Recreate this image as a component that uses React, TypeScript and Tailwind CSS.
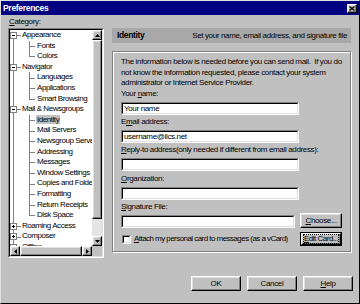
import React from 'react';

const raised =
    'border border-t-white border-l-white border-r-black border-b-black shadow-[inset_-1px_-1px_0_#808080,inset_1px_1px_0_#dfdfdf] bg-[#c0c0c0]';

type Node = { t: string; lvl: 0 | 1; exp?: '+' | '-'; last?: boolean; sel?: boolean };

const tree: Node[] = [
    { t: 'Appearance', lvl: 0, exp: '-' },
    { t: 'Fonts', lvl: 1 },
    { t: 'Colors', lvl: 1, last: true },
    { t: 'Navigator', lvl: 0, exp: '-' },
    { t: 'Languages', lvl: 1 },
    { t: 'Applications', lvl: 1 },
    { t: 'Smart Browsing', lvl: 1, last: true },
    { t: 'Mail & Newsgroups', lvl: 0, exp: '-' },
    { t: 'Identity', lvl: 1, sel: true },
    { t: 'Mail Servers', lvl: 1 },
    { t: 'Newsgroup Servers', lvl: 1 },
    { t: 'Addressing', lvl: 1 },
    { t: 'Messages', lvl: 1 },
    { t: 'Window Settings', lvl: 1 },
    { t: 'Copies and Folders', lvl: 1 },
    { t: 'Formatting', lvl: 1 },
    { t: 'Return Receipts', lvl: 1 },
    { t: 'Disk Space', lvl: 1, last: true },
    { t: 'Roaming Access', lvl: 0, exp: '+' },
    { t: 'Composer', lvl: 0, exp: '+' },
    { t: 'Offline', lvl: 0, exp: '+' },
    { t: 'Advanced', lvl: 0, exp: '+' },
];

const TreeRow: React.FC<{ node: Node; first: boolean }> = ({ node, first }) => (
    <div className="relative h-[10.6px] leading-[10.6px] whitespace-nowrap tracking-[-0.45px]">
        <span className={first ? 'absolute left-[3px] top-1/2 bottom-0 w-px bg-[#808080]' : 'absolute left-[3px] top-0 bottom-0 w-px bg-[#808080]'} />
        {node.lvl === 0 ? (
            <>
                <span className="absolute left-[7px] top-1/2 w-[4px] h-px bg-[#808080]" />
                <span className="absolute left-0 top-[2px] w-[7px] h-[7px] border border-[#808080] bg-white">
                    <span className="absolute left-[1px] top-[2px] w-[3px] h-px bg-black" />
                    {node.exp === '+' && <span className="absolute left-[2px] top-[1px] w-px h-[3px] bg-black" />}
                </span>
                <span className="pl-[12px]">{node.t}</span>
            </>
        ) : (
            <>
                <span className={node.last ? 'absolute left-[19px] top-0 h-1/2 w-px bg-[#808080]' : 'absolute left-[19px] top-0 bottom-0 w-px bg-[#808080]'} />
                <span className="absolute left-[19px] top-1/2 w-[6px] h-px bg-[#808080]" />
                <span className="pl-[27px]">
                    <span className={node.sel ? 'bg-[#c0c0c0] px-px -mx-px' : ''}>{node.t}</span>
                </span>
            </>
        )}
    </div>
);

const Arrow: React.FC<{ dir: 'up' | 'down' | 'left' | 'right' }> = ({ dir }) => {
    const d = {
        up: 'M2.5 0L5 3H0z',
        down: 'M0 0H5L2.5 3z',
        left: 'M3 0V5L0 2.5z',
        right: 'M0 0V5L3 2.5z',
    }[dir];
    const horiz = dir === 'left' || dir === 'right';
    return (
        <div className={`w-[10px] h-[10px] shrink-0 flex items-center justify-center ${raised}`}>
            <svg width={horiz ? 3 : 5} height={horiz ? 5 : 3} viewBox={horiz ? '0 0 3 5' : '0 0 5 3'}>
                <path d={d} fill="black" />
            </svg>
        </div>
    );
};

const Field: React.FC<{ w: string; value?: string }> = ({ w, value }) => (
    <div className={`h-[13px] ${w} border border-t-[#808080] border-l-[#808080] border-r-white border-b-white`}>
        <div className="h-full border border-t-black border-l-black border-r-[#dfdfdf] border-b-[#dfdfdf] bg-white pl-[1px] leading-[10px]">
            {value}
        </div>
    </div>
);

const Button: React.FC<{ className: string; children: React.ReactNode; focus?: boolean }> = ({ className, children, focus }) =>
    focus ? (
        <div className={`${className} border border-black`}>
            <div className={`h-full flex items-center justify-center ${raised}`}>
                <span className="border border-dotted border-black leading-[8px] whitespace-nowrap tracking-[-0.5px]">{children}</span>
            </div>
        </div>
    ) : (
        <div className={`${className} flex items-center justify-center whitespace-nowrap ${raised}`}>{children}</div>
    );

const Label: React.FC<{ children: React.ReactNode; className?: string }> = ({ children, className = '' }) => (
    <div className={`h-[10px] leading-[10px] ${className}`}>{children}</div>
);

export default function App() {
    return (
        <div className="w-[360px] h-[304px] bg-[#c0c0c0] border border-t-[#dfdfdf] border-l-[#dfdfdf] border-r-black border-b-black font-['Liberation_Sans',Arial,sans-serif] text-[8px] tracking-[-0.35px] text-black flex flex-col">
            {/* title bar */}
            <div className="h-[14px] bg-[#000080] flex items-center justify-between pl-[2px] pr-[2px]">
                <span className="text-white font-bold text-[8.5px] tracking-[-0.3px]">Preferences</span>
                <div className={`w-[10px] h-[9px] flex items-center justify-center ${raised}`}>
                    <svg width="6" height="5" viewBox="0 0 6 5">
                        <path d="M0.5 0.5L5.5 4.5M5.5 0.5L0.5 4.5" stroke="black" strokeWidth="1.3" />
                    </svg>
                </div>
            </div>

            <div className="flex pl-[7px]">
                {/* category tree */}
                <div className="w-[96px]">
                    <div className="h-[13px] pt-[2px] pl-[1px] leading-[10px]">
                        <u>C</u>ategory:
                    </div>
                    <div className="w-[96px] h-[230px] border border-t-[#808080] border-l-[#808080] border-r-white border-b-white">
                        <div className="h-full border border-t-black border-l-black border-r-[#dfdfdf] border-b-[#dfdfdf] bg-white flex flex-col">
                            <div className="flex flex-1 min-h-0">
                                <div className="flex-1 overflow-hidden">
                                    {tree.map((n, i) => (
                                        <TreeRow key={n.t} node={n} first={i === 0} />
                                    ))}
                                </div>
                                <div className="w-[10px] flex flex-col">
                                    <Arrow dir="up" />
                                    <div className={`h-[179px] ${raised}`} />
                                    <div className="flex-1 bg-[#e4e4e4]" />
                                    <Arrow dir="down" />
                                </div>
                            </div>
                            <div className="flex h-[10px]">
                                <Arrow dir="left" />
                                <div className={`flex-1 ${raised}`} />
                                <Arrow dir="right" />
                                <div className="w-[10px] bg-[#c0c0c0]" />
                            </div>
                        </div>
                    </div>
                </div>

                {/* right panel */}
                <div className="ml-[8px] w-[239px] mt-[13px]">
                    <div className="h-[15px] bg-[#a8a8a8] flex items-center justify-between pl-[5px] pr-[4px]">
                        <span className="font-bold text-[8.5px]">Identity</span>
                        <span>Set your name, email address, and signature file</span>
                    </div>
                    <div className="mt-[8px] h-[201px] border border-[#808080] shadow-[1px_1px_0_white,inset_1px_1px_0_white] pl-[8px] pt-[5px]">
                        <div className="leading-[10.5px]">
                            The information below is needed before you can send mail.&nbsp; If you do
                            <br />
                            not know the information requested, please contact your system
                            <br />
                            administrator or Internet Service Provider.
                        </div>
                        <Label>
                            Your <u>n</u>ame:
                        </Label>
                        <div className="mt-[3px]">
                            <Field w="w-[178px]" value="Your name" />
                        </div>
                        <Label className="mt-[2px]">
                            E<u>m</u>ail address:
                        </Label>
                        <div className="mt-[3px]">
                            <Field w="w-[178px]" value="username@ilcs.net" />
                        </div>
                        <Label className="mt-[2.5px]">
                            <u>R</u>eply-to address(only needed if different from email address):
                        </Label>
                        <div className="mt-[3px]">
                            <Field w="w-[178px]" />
                        </div>
                        <Label className="mt-[2.5px]">
                            <u>O</u>rganization:
                        </Label>
                        <div className="mt-[3px]">
                            <Field w="w-[178px]" />
                        </div>
                        <Label className="mt-[2.5px]">
                            <u>S</u>ignature File:
                        </Label>
                        <div className="mt-[1px] flex items-end">
                            <Field w="w-[174px]" />
                            <Button className="ml-[5px] w-[42px] h-[15px]">
                                <span>
                                    <u>C</u>hoose...
                                </span>
                            </Button>
                        </div>
                        <div className="mt-[4px] w-[221px] flex items-center justify-between">
                            <div className="flex items-center">
                                <div className="ml-[1px] w-[9px] h-[9px] border border-t-[#808080] border-l-[#808080] border-r-white border-b-white">
                                    <div className="h-full border border-t-black border-l-black border-r-[#dfdfdf] border-b-[#dfdfdf] bg-white" />
                                </div>
                                <span className="ml-[3px] whitespace-nowrap tracking-[-0.55px]">
                                    <u>A</u>ttach my personal card to messages (as a vCard)
                                </span>
                            </div>
                            <Button className="w-[42px] h-[14px] shrink-0" focus>
                                <u>E</u>dit Card...
                            </Button>
                        </div>
                    </div>
                </div>
            </div>

            {/* dialog buttons */}
            <div className="mt-[18px] flex justify-end gap-[6px] pr-[6px]">
                <Button className="w-[50px] h-[15px]">OK</Button>
                <Button className="w-[50px] h-[15px]">Cancel</Button>
                <Button className="w-[50px] h-[15px]">
                    <span>
                        <u>H</u>elp
                    </span>
                </Button>
            </div>
        </div>
    );
}
